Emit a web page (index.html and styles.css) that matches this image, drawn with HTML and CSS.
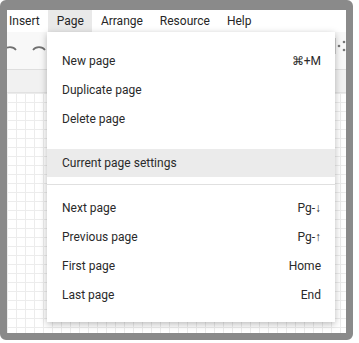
FILE: index.html
```html
<!DOCTYPE html>
<html>
<head>
<meta charset="utf-8">
<link rel="stylesheet" href="styles.css">
</head>
<body>
<div class="frame">
  <div class="menubar">
    <span class="mb-item mb-first">Insert</span>
    <span class="mb-item mb-active">Page</span>
    <span class="mb-item">Arrange</span>
    <span class="mb-item">Resource</span>
    <span class="mb-item">Help</span>
  </div>
  <div class="toolbar">
    <svg class="tb-icon undo" width="14" height="10" viewBox="0 0 14 10"><path d="M1 8 A7 6 0 0 1 13 8" fill="none" stroke="#6f6f6f" stroke-width="1.6"/></svg>
    <svg class="tb-icon redo" width="14" height="10" viewBox="0 0 14 10"><path d="M1 8 A7 6 0 0 1 13 8" fill="none" stroke="#6f6f6f" stroke-width="1.6"/></svg>
    <div class="tb-spacer"></div>
    <div class="tb-right">
      <svg width="10" height="14" viewBox="0 0 10 14"><circle cx="3" cy="7" r="1.3" fill="#777"/><circle cx="8" cy="3" r="1.3" fill="#777"/><circle cx="8" cy="11" r="1.3" fill="#777"/></svg>
    </div>
  </div>
  <div class="subbar"></div>
  <div class="canvas"></div>

  <div class="dropdown">
    <div class="dd-item"><span>New page</span><span class="key">⌘+M</span></div>
    <div class="dd-item"><span>Duplicate page</span></div>
    <div class="dd-item"><span>Delete page</span></div>
    <div class="dd-sep dd-sep-hidden"></div>
    <div class="dd-item dd-hl"><span>Current page settings</span></div>
    <div class="dd-sep"></div>
    <div class="dd-item"><span>Next page</span><span class="key">Pg-↓</span></div>
    <div class="dd-item"><span>Previous page</span><span class="key">Pg-↑</span></div>
    <div class="dd-item"><span>First page</span><span class="key">Home</span></div>
    <div class="dd-item"><span>Last page</span><span class="key">End</span></div>
  </div>
</div>
</body>
</html>
```
FILE: styles.css
```css
html, body {
  margin: 0;
  padding: 0;
  background: #ffffff;
}
body {
  font-family: Roboto, "Liberation Sans", sans-serif;
  width: 359px;
  height: 343px;
  overflow: hidden;
}
.frame {
  position: relative;
  box-sizing: border-box;
  width: 353px;
  height: 340px;
  border: 7px solid #8a8a8a;
  border-top-width: 10px;
  border-radius: 6px;
  display: flex;
  flex-direction: column;
  overflow: hidden;
  background: #fff;
}
.menubar {
  height: 22px;
  flex: none;
  display: flex;
  align-items: stretch;
  background: #fff;
  font-size: 12px;
  color: #262626;
}
.mb-item {
  display: flex;
  align-items: center;
  padding: 0 8.5px;
}
.mb-first {
  margin-left: -6.5px;
}
.mb-active {
  background: #e9e9e9;
}
.toolbar {
  height: 37px;
  flex: none;
  background: #f8f8f8;
  border-bottom: 1px solid #dedede;
  display: flex;
  align-items: center;
}
.tb-icon {
  margin-top: -8px;
}
.undo {
  margin-left: -4px;
}
.redo {
  margin-left: 15px;
}
.tb-spacer {
  flex: 1;
}
.tb-right {
  align-self: flex-start;
  margin-top: 6px;
  height: 16px;
  width: 10px;
  border-left: 1px solid #cfcfcf;
  display: flex;
  align-items: center;
  justify-content: center;
}
.subbar {
  height: 22px;
  flex: none;
  background: #f1f1f1;
  border-bottom: 1px solid #e2e2e2;
}
.canvas {
  flex: 1;
  background-color: #fff;
  background-image:
    linear-gradient(to right, #ececec 1px, transparent 1px),
    linear-gradient(to bottom, #ececec 1px, transparent 1px);
  background-size: 9px 9px;
}
.dropdown {
  position: absolute;
  left: 40px;
  top: 22px;
  width: 288px;
  box-sizing: border-box;
  padding: 14px 0 13px;
  background: #fff;
  box-shadow: 0 2px 7px rgba(0,0,0,0.28);
  font-size: 12px;
  color: #2a2a2a;
}
.dd-item {
  height: 29px;
  display: flex;
  align-items: center;
  justify-content: space-between;
  padding: 0 14px 0 15px;
}
.dd-hl {
  background: #ebebeb;
  height: 28px;
}
.dd-sep {
  height: 1px;
  background: #e0e0e0;
  margin: 7px 0 8px;
}
.dd-sep-hidden {
  background: transparent;
}
.key {
  color: #2a2a2a;
}
```
